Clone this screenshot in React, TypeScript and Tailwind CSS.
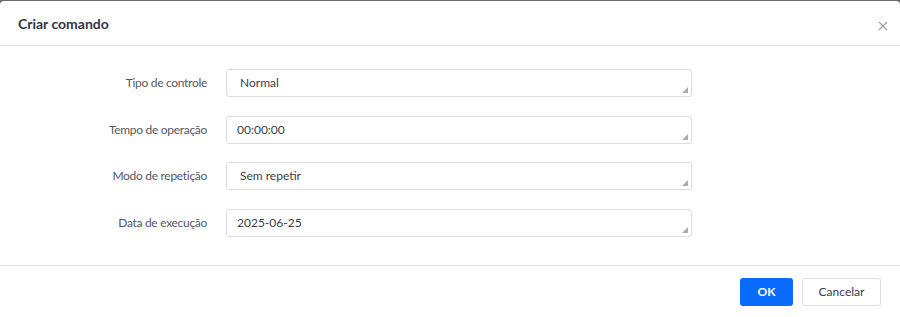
const fields = [
  { label: 'Tipo de controle', value: 'Normal', pad: 'pl-[13px]' },
  { label: 'Tempo de operação', value: '00:00:00', pad: 'pl-[10px]' },
  { label: 'Modo de repetição', value: 'Sem repetir', pad: 'pl-[13px]' },
  { label: 'Data de execução', value: '2025-06-25', pad: 'pl-[10px]' },
];

const Grip = () => (
  <svg
    className="absolute right-[3px] bottom-[3px]"
    width="6"
    height="6"
    viewBox="0 0 6 6"
  >
    <path d="M6 0 L6 6 L0 6 Z" fill="#a9abb3" />
  </svg>
);

export default function App() {
  return (
    <div
      className="w-[900px] h-[317px] bg-[#6b6b6b] pt-[1px]"
      style={{ fontFamily: 'Lato, "Noto Sans", sans-serif' }}
    >
      <div className="h-[316px] bg-white rounded-t-[4px] flex flex-col">
        <div className="h-[45px] flex items-center justify-between pl-[18px] pr-[12px] border-b border-[#e4e4e7]">
          <span className="text-[14px] font-bold text-[#323646]">Criar comando</span>
          <svg width="10" height="10" viewBox="0 0 10 10" className="mt-[5px]">
            <path d="M1 1 L9 9 M9 1 L1 9" stroke="#9a9ca5" strokeWidth="1.1" />
          </svg>
        </div>

        <div className="flex flex-col gap-[18.67px] pt-[23px] pb-[28px] border-b border-[#e4e4e7]">
          {fields.map((f) => (
            <div key={f.label} className="flex items-center">
              <div className="w-[208px] text-right pr-[1px] text-[12px] tracking-[-0.3px] text-[#555861]">
                {f.label}
              </div>
              <div
                className={`relative ml-[18px] w-[466px] h-[28px] border border-[#dcdde2] rounded-[3px] flex items-center text-[12px] text-[#3a3d45] ${f.pad}`}
              >
                {f.value}
                <Grip />
              </div>
            </div>
          ))}
        </div>

        <div className="flex justify-end gap-[9px] pt-[12px] pr-[19px]">
          <button className="w-[53px] h-[28px] rounded-[3px] bg-[#0a6cff] text-white text-[12px] font-bold">
            OK
          </button>
          <button className="w-[79px] h-[28px] rounded-[3px] border border-[#dcdde2] bg-white text-[#3a3d45] text-[12px]">
            Cancelar
          </button>
        </div>
      </div>
    </div>
  );
}
